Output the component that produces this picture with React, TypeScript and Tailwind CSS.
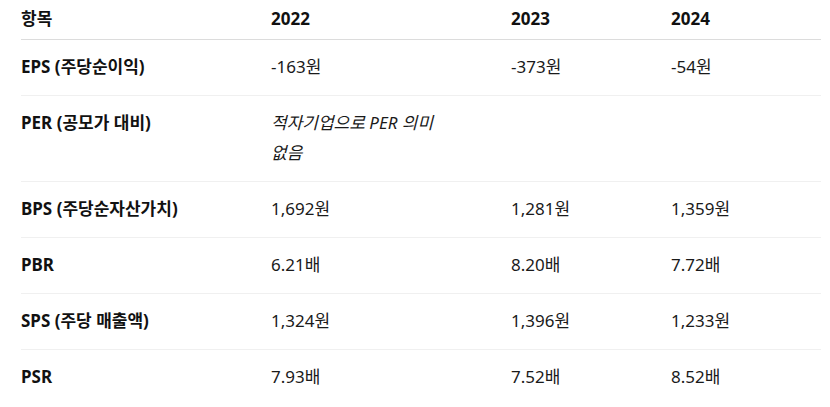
import React from "react";

const rows: { label: string; v: [string, string, string]; italic?: boolean }[] = [
  { label: "EPS (주당순이익)", v: ["-163원", "-373원", "-54원"] },
  { label: "PER (공모가 대비)", v: ["적자기업으로 PER 의미 없음", "", ""], italic: true },
  { label: "BPS (주당순자산가치)", v: ["1,692원", "1,281원", "1,359원"] },
  { label: "PBR", v: ["6.21배", "8.20배", "7.72배"] },
  { label: "SPS (주당 매출액)", v: ["1,324원", "1,396원", "1,233원"] },
  { label: "PSR", v: ["7.93배", "7.52배", "8.52배"] },
];

export default function App() {
  return (
    <div
      className="w-[830px] h-[407px] bg-white overflow-hidden"
      style={{ fontFamily: '"Noto Sans", "Noto Sans CJK KR", sans-serif' }}
    >
      <table className="ml-[21px] w-[800px] table-fixed border-collapse text-[17px] leading-[30px] text-[#1a1a1a]">
        <colgroup>
          <col className="w-[250px]" />
          <col className="w-[240px]" />
          <col className="w-[160px]" />
          <col className="w-[150px]" />
        </colgroup>
        <thead>
          <tr className="border-b border-[#dcdcdc]">
            {["항목", "2022", "2023", "2024"].map((h) => (
              <th key={h} className="text-left font-bold text-[#111] pt-[4px] pb-[5px] p-0 align-top">
                {h}
              </th>
            ))}
          </tr>
        </thead>
        <tbody>
          {rows.map((r, i) => (
            <tr key={r.label} className={i < rows.length - 1 ? "border-b border-[#f0f0f0]" : ""}>
              <td className="font-bold text-[#111] pt-[12px] pb-[13px] align-top">{r.label}</td>
              {r.v.map((c, j) => (
                <td
                  key={j}
                  className={`pt-[12px] pb-[13px] align-top ${j === 0 ? "pr-[60px]" : ""} ${r.italic ? "italic" : ""}`}
                >
                  {c}
                </td>
              ))}
            </tr>
          ))}
        </tbody>
      </table>
    </div>
  );
}
